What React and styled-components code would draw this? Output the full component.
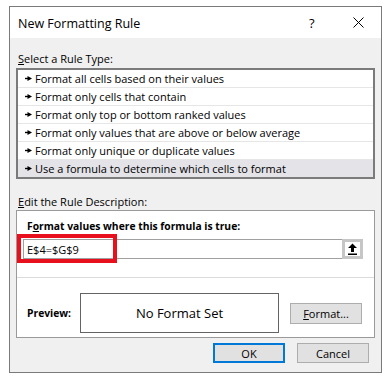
import React from 'react'
import styled, { createGlobalStyle } from 'styled-components'

const GlobalStyle = createGlobalStyle`
  body {
    margin: 0;
    background: #fff;
    font-family: "Open Sans", "Noto Sans", sans-serif;
    color: #000;
  }
`

const ruleTypes = [
  'Format all cells based on their values',
  'Format only cells that contain',
  'Format only top or bottom ranked values',
  'Format only values that are above or below average',
  'Format only unique or duplicate values',
  'Use a formula to determine which cells to format',
]

const App = () => {
  return (
    <>
      <GlobalStyle />
      <Page>
        <Dialog>
          <TitleBar>
            <Title>New Formatting Rule</Title>
            <HelpMark>?</HelpMark>
            <CloseIcon width="11" height="11" viewBox="0 0 11 11">
              <path d="M0.5 0.5 L10.5 10.5 M10.5 0.5 L0.5 10.5" stroke="#000" strokeWidth="1" />
            </CloseIcon>
          </TitleBar>
          <Body>
            <SectionLabel>
              <u>S</u>elect a Rule Type:
            </SectionLabel>
            <RuleList>
              {ruleTypes.map((t, i) => (
                <RuleRow key={t} selected={i === ruleTypes.length - 1}>
                  <svg width="7" height="5" viewBox="0 0 7 5">
                    <path d="M0 1.8 H3 V3.2 H0 Z" fill="#000" />
                    <path d="M2.5 0 L7 2.5 L2.5 5 Z" fill="#000" />
                  </svg>
                  {t}
                </RuleRow>
              ))}
            </RuleList>

            <SectionLabel top={15}>
              <u>E</u>dit the Rule Description:
            </SectionLabel>
            <DescPanel>
              <BoldLabel>
                F<u>o</u>rmat values where this formula is true:
              </BoldLabel>
              <FormulaField>
                <FormulaText>E$4=$G$9</FormulaText>
                <RefButton>
                  <svg width="11" height="12" viewBox="0 0 11 12">
                    <path d="M5.5 0.5 L10 5 H7 V9 H4 V5 H1 Z" fill="#000" />
                    <rect x="1" y="10.5" width="9" height="1.5" fill="#000" />
                  </svg>
                </RefButton>
                <Highlight />
              </FormulaField>
              <Divider />
              <PreviewRow>
                <PreviewLabel>Preview:</PreviewLabel>
                <PreviewBox>No Format Set</PreviewBox>
                <Button width={72}>
                  <u>F</u>ormat...
                </Button>
              </PreviewRow>
            </DescPanel>
            <Footer>
              <Button width={72} primary>
                OK
              </Button>
              <Button width={72}>Cancel</Button>
            </Footer>
          </Body>
        </Dialog>
      </Page>
    </>
  )
}

const Page = styled.div`
  padding: 6px 0 0 9px;
`

const Dialog = styled.div`
  box-sizing: border-box;
  width: 373px;
  height: 367px;
  border: 1px solid #7a7a7a;
  display: flex;
  flex-direction: column;
  background: #f0f0f0;
`

const TitleBar = styled.div`
  height: 31px;
  background: #fff;
  display: flex;
  align-items: center;
  padding-left: 8px;
`

const Title = styled.div`
  flex: 1;
  font-size: 12.5px;
  padding-top: 1px;
`

const HelpMark = styled.div`
  font-size: 13px;
  width: 10px;
  margin-right: 34px;
  padding-top: 1px;
`

const CloseIcon = styled.svg`
  margin-right: 17px;
`

const Body = styled.div`
  flex: 1;
  display: flex;
  flex-direction: column;
  padding: 0 6px;
`

const SectionLabel = styled.div`
  font-size: 11px;
  line-height: 16px;
  padding-left: 2px;
  margin-top: ${p => (p.top ? p.top : 13)}px;
`

const RuleList = styled.div`
  margin-top: 1px;
  border: 2px solid #7b7b7b;
  background: #fff;
  display: flex;
  flex-direction: column;
`

const RuleRow = styled.div`
  height: 17px;
  border-bottom: 1px solid #e6e6e6;
  display: flex;
  align-items: center;
  gap: 3px;
  padding-left: 7px;
  font-size: 11px;
  background: ${p => (p.selected ? '#e3e3e8' : '#fff')};
  &:last-child {
    border-bottom: none;
  }
`

const DescPanel = styled.div`
  border: 1px solid #9a9a9a;
  background: #fff;
  height: 128px;
  box-sizing: border-box;
  display: flex;
  flex-direction: column;
  padding: 7px 0 0;
`

const BoldLabel = styled.div`
  font-size: 10.3px;
  font-weight: 700;
  line-height: 16px;
  padding-left: 10px;
`

const PreviewLabel = styled(BoldLabel)`
  flex: 0 0 63px;
  box-sizing: border-box;
`

const FormulaField = styled.div`
  position: relative;
  margin: 5px 0 0 6px;
  width: 340px;
  height: 20px;
  box-sizing: border-box;
  border: 1px solid #a0a0a0;
  display: flex;
  align-items: center;
`

const FormulaText = styled.span`
  flex: 1;
  font-size: 11px;
  padding-left: 3px;
`

const RefButton = styled.div`
  width: 21px;
  height: 20px;
  margin: -1px -1px -1px 0;
  box-sizing: border-box;
  border: 3px solid #c6c6c6;
  background: #fff;
  display: flex;
  align-items: center;
  justify-content: center;
`

const Highlight = styled.div`
  position: absolute;
  left: -7px;
  top: -6px;
  width: 100px;
  height: 29px;
  box-sizing: border-box;
  border: 4px solid #e8101c;
  pointer-events: none;
`

const Divider = styled.div`
  margin-top: 18px;
  height: 1px;
  background: #dadada;
`

const PreviewRow = styled.div`
  display: flex;
  align-items: center;
  margin-top: 15px;
`

const PreviewBox = styled.div`
  width: 199px;
  height: 40px;
  box-sizing: border-box;
  border: 1px solid #646464;
  display: flex;
  align-items: center;
  justify-content: center;
  font-size: 13px;
`

const Button = styled.button`
  box-sizing: border-box;
  width: ${p => p.width}px;
  height: 21px;
  padding: 0;
  margin-left: 11px;
  font-family: "Open Sans", "Noto Sans", sans-serif;
  font-size: 11px;
  color: #000;
  background: #e1e1e1;
  border: ${p => (p.primary ? '2px solid #0078d7' : '1px solid #adadad')};
`

const Footer = styled.div`
  display: flex;
  justify-content: flex-end;
  gap: 12px;
  margin-top: 5px;
  padding-right: 6px;
  ${Button} {
    margin-left: 0;
    height: 20px;
  }
`

export default App
